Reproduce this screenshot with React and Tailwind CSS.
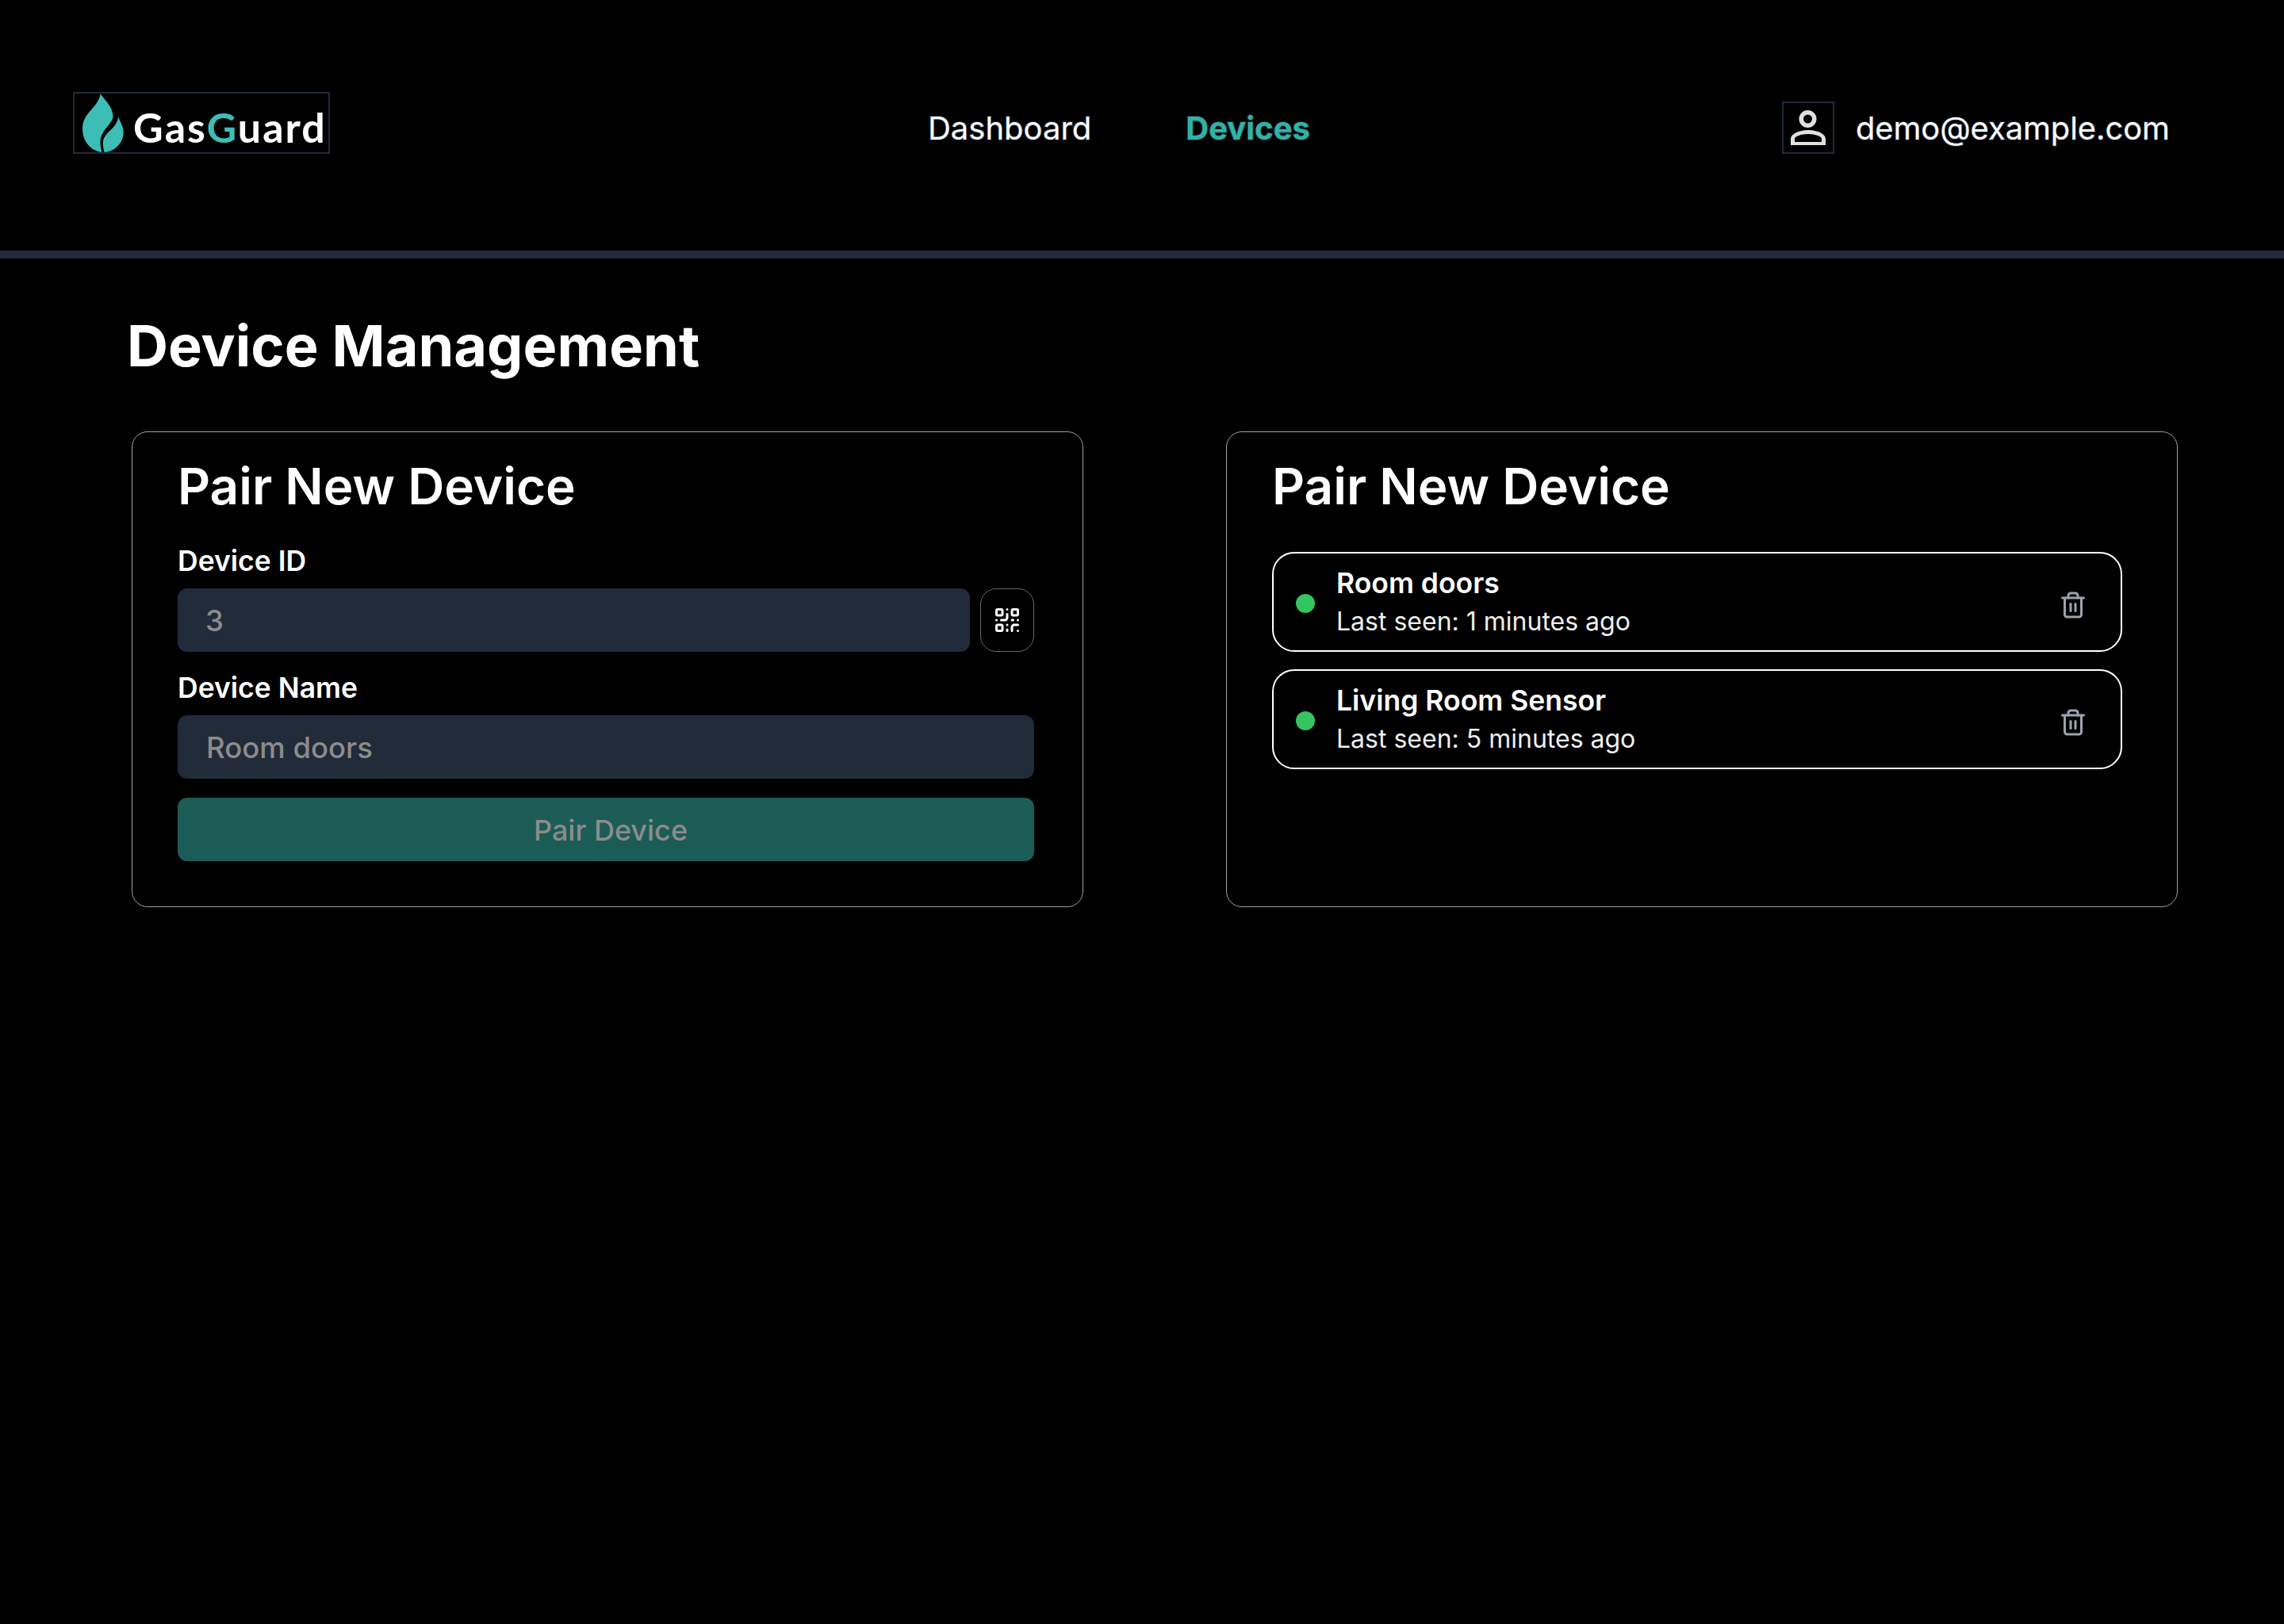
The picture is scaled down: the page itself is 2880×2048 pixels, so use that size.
import React from 'react';
import { QrCode, Trash2 } from 'lucide-react';

const devices = [
  { name: 'Room doors', seen: 'Last seen: 1 minutes ago' },
  { name: 'Living Room Sensor', seen: 'Last seen: 5 minutes ago' },
];

const Flame = () => (
  <svg width="52" height="74" viewBox="0 0 52 74" className="shrink-0">
    <path fill="#3cbdb6" d="M22.700 0C27 8 38.500 15 38.500 30C36 40 23 46 22.500 61C22.500 66 23.500 70 24.300 74C10 72 0 60 0 44C0 24 20 18 22.700 0Z" />
    <path fill="#3cbdb6" d="M45 29C47 35 51.700 41 51.700 49C51.700 62 41 73 27.700 74C26 69 25.500 64 26 60C28 48 44 44 45 29Z" />
  </svg>
);

const UserGlyph = () => (
  <svg width="44" height="44" viewBox="0 0 44 44">
    <circle cx="21.500" cy="11" r="8.250" fill="none" stroke="#e0e0e0" strokeWidth="5.500" />
    <path fill="#e0e0e0" fillRule="evenodd" d="M0 44V36C0 30 10 25 22 25C34 25 44 30 44 36V44ZM5 40H39V36C39 33 31 30 22 30C13 30 5 33 5 36Z" />
  </svg>
);

export default function App() {
  return (
    <div className="w-full min-h-screen bg-black text-white font-['Inter',sans-serif]">
      <header className="h-[326px] border-b-[10px] border-[#222b3a] pl-[92px] pr-[144px] pt-[116px] flex items-start justify-between">
        <div className="w-[324px] h-[78px] border-2 border-[#222b3a] flex items-center pl-[10px] gap-[12px]">
          <Flame />
          <span className="pt-[10px] text-[52px] leading-none tracking-[2px] font-['Lato',sans-serif] font-bold whitespace-nowrap">
            Gas<span className="text-[#3cbdb6]">G</span>uard
          </span>
        </div>
        <nav className="ml-[159px] flex items-center gap-[119px] mt-[18px] text-[40px] leading-[56px] [-webkit-text-stroke:2px_#222b3a] [paint-order:stroke_fill]">
          <a>Dashboard</a>
          <a className="font-bold text-[#2fb3a6]">Devices</a>
        </nav>
        <div className="flex items-center gap-[27px] mt-[12px]">
          <div className="w-[66px] h-[66px] border-2 border-[#222b3a] flex items-center justify-center">
            <UserGlyph />
          </div>
          <span className="pt-[2px] text-[39.800px] leading-[56px] [-webkit-text-stroke:2px_#222b3a] [paint-order:stroke_fill]">demo@example.com</span>
        </div>
      </header>

      <main className="pl-[160px] pr-[134px] pt-[62px]">
        <h1 className="text-[72px] leading-[96px] font-bold">Device Management</h1>
        <div className="mt-[60px] pl-[6px] grid grid-cols-2 gap-[180px]">
          <section className="h-[600px] border border-[#a0a0a0] rounded-[20px] pl-[57px] pr-[61px] pt-[28px]">
            <h2 className="text-[63.800px] leading-[80px] font-semibold">Pair New Device</h2>
            <label className="block mt-[31px] mb-[10px] text-[35.500px] leading-[48px] font-semibold">Device ID</label>
            <div className="flex gap-[13px]">
              <div className="flex-1 h-[80px] bg-[#222b3a] rounded-[12px] pl-[35px] pt-[2px] flex items-center text-[36.500px] font-medium text-[#8c8c8c]">3</div>
              <button className="w-[68px] h-[80px] border border-[#666666] rounded-[20px] flex items-center justify-center">
                <QrCode size={36} color="#ffffff" />
              </button>
            </div>
            <label className="block mt-[22px] mb-[10px] text-[35.500px] leading-[48px] font-semibold">Device Name</label>
            <div className="h-[80px] bg-[#222b3a] rounded-[12px] pl-[36px] pt-[2px] flex items-center text-[36.500px] text-[#8c8c8c] font-medium">Room doors</div>
            <button className="mt-[24px] w-full h-[80px] bg-[#1c5c56] rounded-[12px] pl-[12px] pt-[2px] text-[36px] text-[#8c8c8c] font-medium">Pair Device</button>
          </section>

          <section className="h-[600px] border border-[#a0a0a0] rounded-[20px] pl-[57px] pr-[61px] pt-[28px]">
            <h2 className="text-[63.800px] leading-[80px] font-semibold">Pair New Device</h2>
            <div className="mt-[43px] mr-[8px] flex flex-col gap-[22px]">
              {devices.map(device => (
                <div key={device.name} className="h-[126px] border-2 border-white rounded-[28px] pl-[28px] pr-[42px] flex items-center">
                  <span className="mt-[4px] w-[24px] h-[24px] rounded-full bg-[#34c55f] shrink-0" />
                  <div className="ml-[27px] flex-1">
                    <p className="mb-[3px] text-[35.500px] leading-[46px] font-semibold">{device.name}</p>
                    <p className="text-[32px] leading-[44px] text-[#eeeeee]">{device.seen}</p>
                  </div>
                  <Trash2 size={36} color="#9ca3af" className="mt-[8px]" />
                </div>
              ))}
            </div>
          </section>
        </div>
      </main>
    </div>
  );
}
